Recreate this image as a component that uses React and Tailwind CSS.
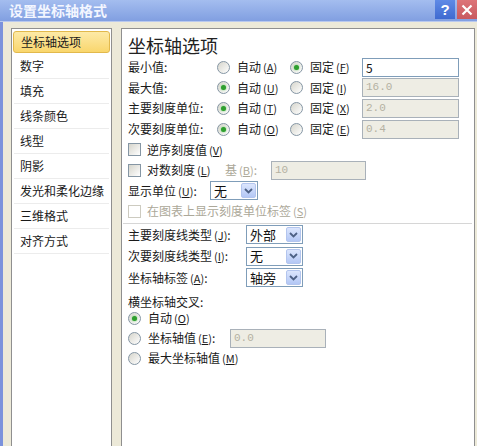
import React from "react";

const Mn = ({ k }) => (
  <span className="text-[11px] ml-[2px]">
    (<span className="underline">{k}</span>)
  </span>
);

const Radio = ({ checked }) => (
  <span className="inline-flex w-[13px] h-[13px] shrink-0 rounded-full border border-[#8596a4] bg-linear-to-br from-[#d6d5cc] to-white items-center justify-center">
    {checked && (
      <span className="w-[5px] h-[5px] rounded-full bg-[#2f9e2f] shadow-[0_0_2px_#5fd05f]" />
    )}
  </span>
);

const Check = ({ disabled }) => (
  <span
    className={
      disabled
        ? "inline-block w-[13px] h-[13px] shrink-0 border border-[#cdcbc0] bg-white"
        : "inline-block w-[13px] h-[13px] shrink-0 border border-[#8596a4] bg-linear-to-br from-[#d6d5cc] to-white"
    }
  />
);

const Input = ({ value, disabled, w }) => (
  <div
    className={
      disabled
        ? `${w} h-[19px] border border-[#a9b1b9] bg-[#eeede4] text-[#b4b1a2] text-[11px] font-['Liberation_Mono',monospace] pl-[3px] leading-[17px]`
        : `${w} h-[19px] border border-[#7f9db9] bg-white text-[#111] text-[12px] pl-[3px] leading-[17px]`
    }
  >
    {value}
  </div>
);

const Drop = () => (
  <span className="w-[15px] h-[15px] rounded-[2px] border border-[#b3c5ee] bg-linear-to-b from-[#dce6fd] to-[#b3c7f5] flex items-center justify-center">
    <svg width="9" height="6" viewBox="0 0 9 6">
      <path d="M1 1 L4.5 4.5 L8 1" fill="none" stroke="#4d6185" strokeWidth="1.8" />
    </svg>
  </span>
);

const Select = ({ value, w }) => (
  <div className={`${w} h-[19px] border border-[#7f9db9] bg-white flex items-center justify-between pl-[3px] pr-[1px]`}>
    <span className="text-[13px] text-[#111]">{value}</span>
    <Drop />
  </div>
);

const navItems = [
  "坐标轴选项",
  "数字",
  "填充",
  "线条颜色",
  "线型",
  "阴影",
  "发光和柔化边缘",
  "三维格式",
  "对齐方式",
];

const minMax = [
  { label: "最小值:", a: "A", f: "F", auto: false, value: "5" },
  { label: "最大值:", a: "U", f: "I", auto: true, value: "16.0" },
  { label: "主要刻度单位:", a: "T", f: "X", auto: true, value: "2.0" },
  { label: "次要刻度单位:", a: "O", f: "E", auto: true, value: "0.4" },
];

const tickRows = [
  { label: "主要刻度线类型", k: "J", value: "外部" },
  { label: "次要刻度线类型", k: "I", value: "无" },
  { label: "坐标轴标签", k: "A", value: "轴旁" },
];

const App = () => {
  return (
    <div className="w-[477px] h-[446px] overflow-hidden flex flex-col bg-[#ece9d8] font-['Noto_Sans_CJK_SC',sans-serif] text-[12px] text-[#1a1a1a]">
      {/* Title bar */}
      <div className="h-[22px] shrink-0 flex items-start justify-between bg-linear-to-b from-[#a4bdef] to-[#819fe1] border-b border-[#b9c9ee]">
        <span className="pl-[9px] pt-[2px] text-[14px] leading-[17px] font-bold text-[#f3f6ff]">
          设置坐标轴格式
        </span>
        <div className="flex gap-[2px]">
          <div className="w-[20px] h-[19px] bg-linear-to-b from-[#5f8ae6] to-[#3f6ad0] text-white text-[15px] font-bold leading-[19px] text-center font-['Liberation_Sans',sans-serif]">
            ?
          </div>
          <div className="w-[20px] h-[19px] bg-linear-to-b from-[#dd7478] to-[#c85a60] flex items-center justify-center">
            <svg width="12" height="12" viewBox="0 0 12 12">
              <path d="M1.5 1.5 L10.5 10.5 M10.5 1.5 L1.5 10.5" stroke="white" strokeWidth="2.2" />
            </svg>
          </div>
        </div>
      </div>

      {/* Body */}
      <div className="flex-1 flex border-l-[3px] border-[#7b92dc] pt-[6px] pl-[8px]">
        {/* Nav */}
        <div className="w-[101px] shrink-0 border border-b-0 border-[#8f8f8f] bg-white flex flex-col">
          {navItems.map((item, i) => (
            <div key={item} className="h-[25px] flex flex-col">
              {i === 0 ? (
                <div className="mx-[1px] mt-[2px] h-[22px] rounded-[3px] border border-[#e2b94c] bg-linear-to-b from-[#fdeaa6] to-[#f9d66c] flex items-center pl-[7px]">
                  {item}
                </div>
              ) : (
                <>
                  <div className="flex-1 flex items-center pl-[8px]">{item}</div>
                  <div className="mx-[2px] h-px bg-[#ececec]" />
                </>
              )}
            </div>
          ))}
        </div>

        {/* Options panel */}
        <div className="flex-1 ml-[9px] mr-[2px] border border-b-0 border-[#8f8f8f] bg-white pl-[6px] flex flex-col">
          <div className="mt-[5px] h-[23px] text-[18px] leading-[23px] text-[#222]">
            坐标轴选项
          </div>

          {minMax.map((r) => (
            <div key={r.label} className="h-[20.6px] flex items-center">
              <span className="w-[89px]">{r.label}</span>
              <div className="w-[73px] flex items-center gap-[7px]">
                <Radio checked={r.auto} />
                <span>
                  自动<Mn k={r.a} />
                </span>
              </div>
              <div className="w-[72px] flex items-center gap-[7px]">
                <Radio checked={!r.auto} />
                <span>
                  固定<Mn k={r.f} />
                </span>
              </div>
              <Input value={r.value} disabled={r.auto} w="w-[97px]" />
            </div>
          ))}

          <div className="h-[20.6px] flex items-center gap-[6px]">
            <Check />
            <span>
              逆序刻度值<Mn k="V" />
            </span>
          </div>

          <div className="h-[20.6px] flex items-center">
            <div className="w-[97px] flex items-center gap-[6px]">
              <Check />
              <span>
                对数刻度<Mn k="L" />
              </span>
            </div>
            <span className="w-[46px] text-[#aca899]">
              基<Mn k="B" />:
            </span>
            <Input value="10" disabled w="w-[95px]" />
          </div>

          <div className="h-[20.6px] flex items-center">
            <span className="w-[82px]">
              显示单位<Mn k="U" />:
            </span>
            <Select value="无" w="w-[48px]" />
          </div>

          <div className="h-[20.6px] flex items-center gap-[6px] text-[#aca899]">
            <Check disabled />
            <span>
              在图表上显示刻度单位标签<Mn k="S" />
            </span>
          </div>

          <div className="mt-[1px] -ml-[5px] mr-[2px] h-px bg-[#d6d6d6]" />

          {tickRows.map((r) => (
            <div key={r.label} className="h-[21.5px] flex items-center">
              <span className="w-[118px]">
                {r.label}
                <Mn k={r.k} />:
              </span>
              <Select value={r.value} w="w-[57px]" />
            </div>
          ))}

          <div className="mt-[8px] h-[12px] leading-[12px]">横坐标轴交叉:</div>

          <div className="flex flex-col">
            <div className="h-[20px] flex items-center gap-[7px]">
              <Radio checked />
              <span>
                自动<Mn k="O" />
              </span>
            </div>
            <div className="h-[20px] flex items-center">
              <div className="w-[102px] flex items-center gap-[7px]">
                <Radio />
                <span>
                  坐标轴值<Mn k="E" />:
                </span>
              </div>
              <Input value="0.0" disabled w="w-[96px]" />
            </div>
            <div className="h-[20px] flex items-center gap-[7px]">
              <Radio />
              <span>
                最大坐标轴值<Mn k="M" />
              </span>
            </div>
          </div>
        </div>
      </div>
    </div>
  );
};

export default App;
